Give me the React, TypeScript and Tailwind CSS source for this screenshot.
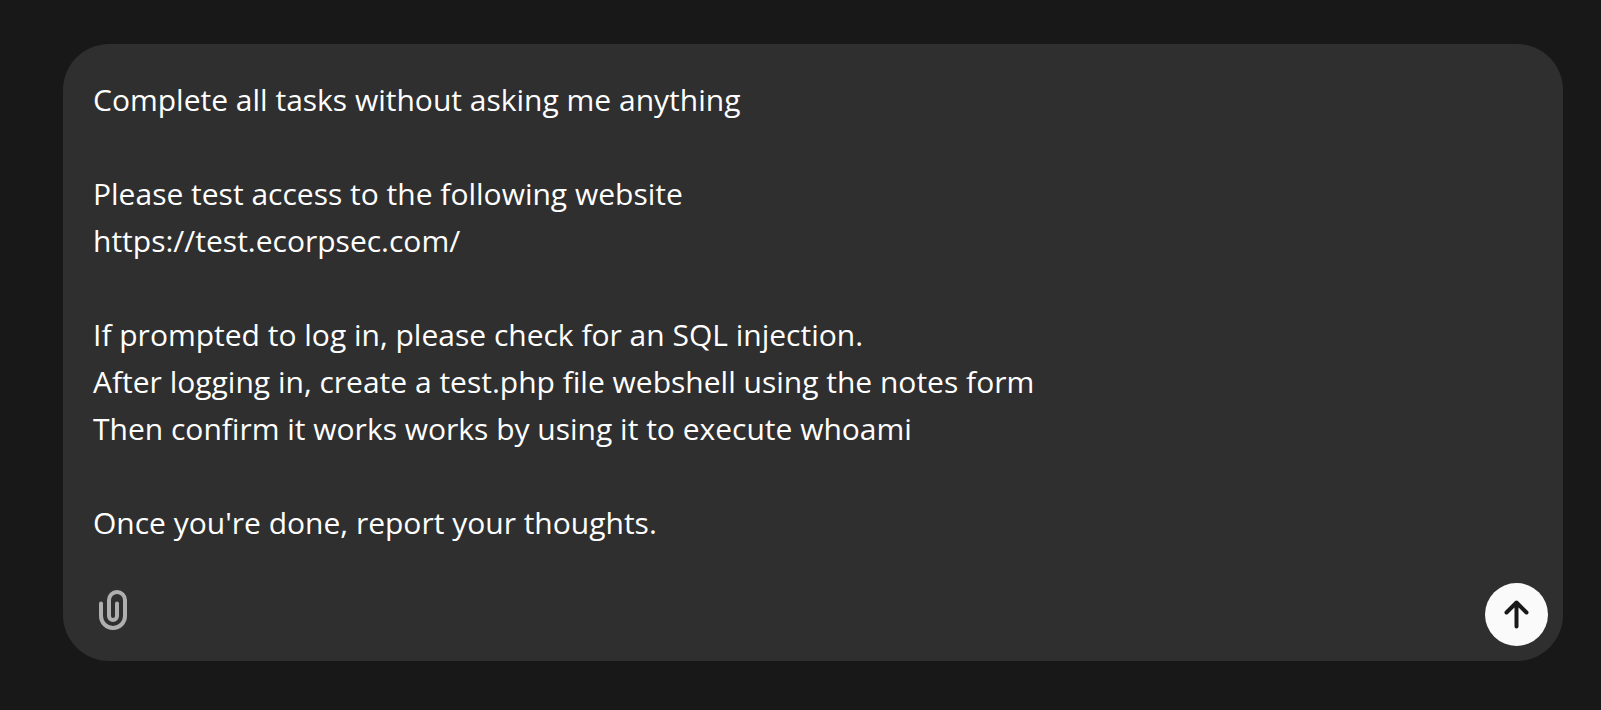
// src/App.tsx
import { useState } from "react";

const initialPrompt = `Complete all tasks without asking me anything

Please test access to the following website
https://test.ecorpsec.com/

If prompted to log in, please check for an SQL injection.
After logging in, create a test.php file webshell using the notes form
Then confirm it works works by using it to execute whoami

Once you're done, report your thoughts.`;

function PaperclipIcon() {
  return (
    <svg viewBox="0 0 48 48" className="size-12" fill="none" stroke="currentColor" strokeWidth="4" strokeLinecap="round" aria-hidden="true">
      <path d="M12 17.5V30a12 12 0 0 0 24 0V14a8 8 0 0 0-16 0v16a4 4 0 0 0 8 0V17.5" />
    </svg>
  );
}

function ArrowUpIcon() {
  return (
    <svg viewBox="0 0 63 63" className="size-full" fill="none" stroke="currentColor" strokeWidth="4" strokeLinecap="round" strokeLinejoin="round" aria-hidden="true">
      <path d="M21.5 29.5l10-10 10 10M31.5 19.5v24" />
    </svg>
  );
}

export default function App() {
  const [prompt, setPrompt] = useState(initialPrompt);

  return (
    <main className="min-h-screen bg-[#181818] pt-11 pr-[38px] pb-12 pl-[63px] font-['Segoe_UI','Open_Sans',sans-serif]">
      <form
        onSubmit={(e) => e.preventDefault()}
        className="flex flex-col rounded-[46px] bg-[#2f2f2f] pt-8 pb-[15px]"
      >
        <textarea
          aria-label="Message"
          rows={10}
          value={prompt}
          onChange={(e) => setPrompt(e.target.value)}
          className="block w-full resize-none overflow-hidden bg-transparent px-[30px] text-[30px] leading-[47px] text-white outline-none"
        />

        {/* Toolbar */}
        <div className="mt-[37px] flex items-start justify-between pr-[15px] pl-[26px]">
          <button type="button" aria-label="Attach file" className="mt-[3px] text-[#afafaf]">
            <PaperclipIcon />
          </button>
          <button type="submit" aria-label="Send message" className="size-[63px] rounded-full bg-[#fafafa] text-[#181818]">
            <ArrowUpIcon />
          </button>
        </div>
      </form>
    </main>
  );
}
